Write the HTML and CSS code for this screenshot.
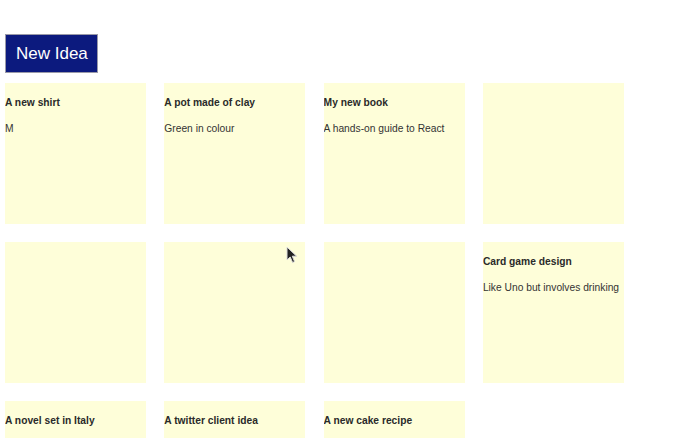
FILE: index.html
```html
<!DOCTYPE html>
<html>
<head>
<meta charset="utf-8">
<link rel="stylesheet" href="styles.css">
</head>
<body>
<div class="app">
  <div class="toolbar">
    <button class="new-idea">New Idea</button>
  </div>
  <div class="board">
    <div class="card"><div class="title">A new shirt</div><div class="body">M</div></div>
    <div class="card"><div class="title">A pot made of clay</div><div class="body">Green in colour</div></div>
    <div class="card"><div class="title">My new book</div><div class="body">A hands-on guide to React</div></div>
    <div class="card"></div>
    <div class="card"></div>
    <div class="card"></div>
    <div class="card"></div>
    <div class="card"><div class="title">Card game design</div><div class="body">Like Uno but involves drinking</div></div>
    <div class="card"><div class="title">A novel set in Italy</div></div>
    <div class="card"><div class="title">A twitter client idea</div></div>
    <div class="card"><div class="title">A new cake recipe</div></div>
  </div>
</div>
<svg class="cursor" width="12" height="18" viewBox="0 0 12 18">
  <path d="M1 1 L1 14 L4.2 11 L6.6 16.5 L8.6 15.6 L6.3 10.2 L10.6 10.2 Z" fill="#222" stroke="#ddd" stroke-width="1"/>
</svg>
</body>
</html>
```
FILE: styles.css
```css
html, body {
  margin: 0;
  padding: 0;
  background: #ffffff;
  height: 100%;
  overflow: hidden;
}
body {
  font-family: "Liberation Sans", Arial, sans-serif;
  position: relative;
}
.app {
  padding: 34px 0 0 5px;
}
.toolbar {
  display: flex;
  margin-bottom: 10px;
}
.new-idea {
  box-sizing: border-box;
  width: 93px;
  height: 39px;
  padding: 0 10px;
  background: #0c1a7e;
  color: #ffffff;
  border: 1px solid #9a9aa8;
  font-family: "Liberation Sans", Arial, sans-serif;
  font-size: 17px;
  line-height: 20px;
  text-align: left;
  white-space: nowrap;
}
.board {
  display: grid;
  grid-template-columns: repeat(4, 141px);
  grid-auto-rows: 141px;
  column-gap: 18.3px;
  row-gap: 18px;
}
.card {
  background: #fefed9;
  padding-top: 13.5px;
  box-sizing: border-box;
  color: #2e2e2e;
  font-size: 10.25px;
  line-height: 12px;
  overflow: hidden;
}
.title {
  font-weight: bold;
  color: #2a2a2a;
}
.body {
  margin-top: 14.5px;
  color: #333333;
}
.cursor {
  position: absolute;
  left: 286px;
  top: 246px;
}
```
